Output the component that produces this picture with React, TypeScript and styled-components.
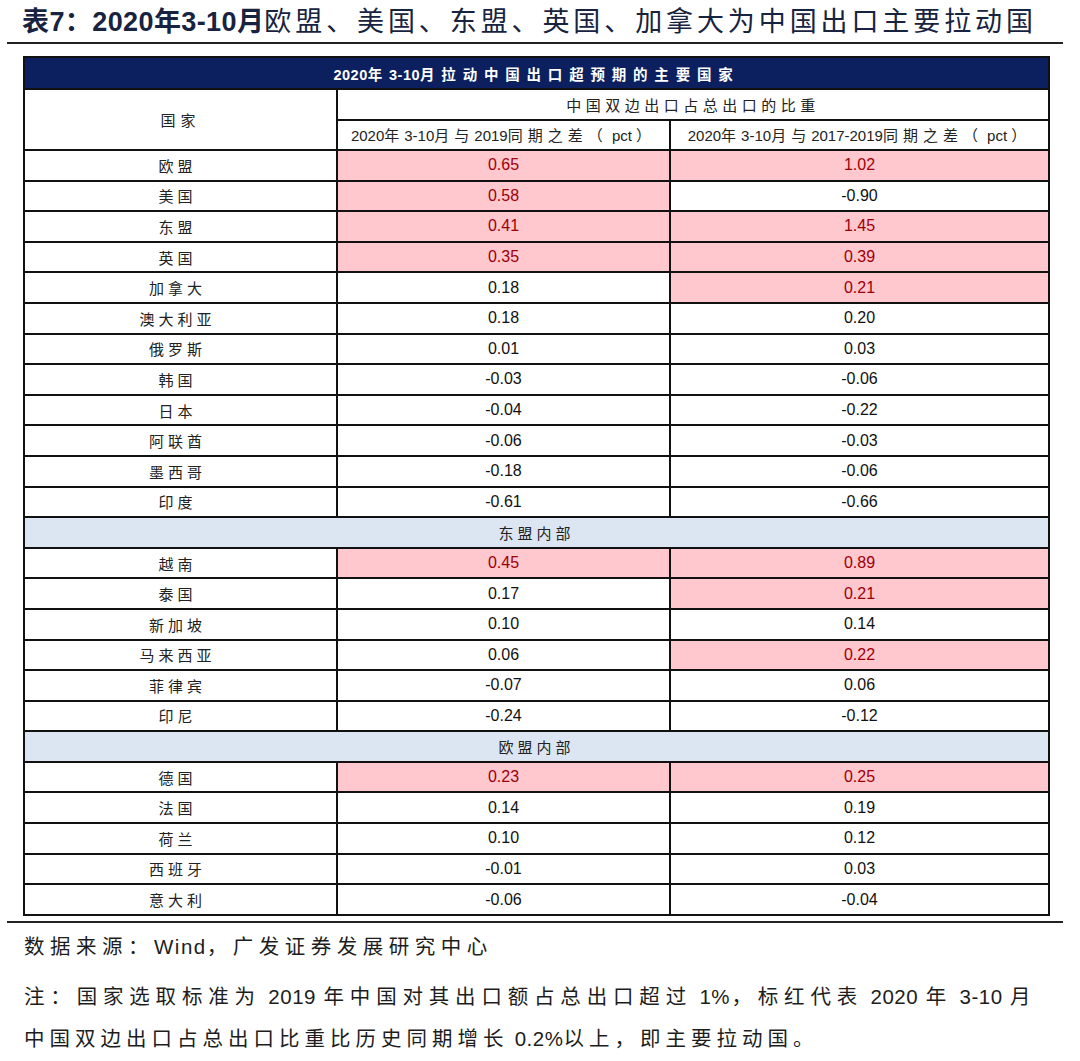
import React from "react";
import styled, { createGlobalStyle } from "styled-components";

const Global = createGlobalStyle`
  html, body { margin: 0; padding: 0; background: #fff; }
  body { font-family: "Liberation Sans", "Noto Sans CJK SC", sans-serif; }
`;

const Page = styled.div`
  width: 1080px;
  height: 1061px;
  overflow: hidden;
  display: flex;
  flex-direction: column;
`;

const Han = styled.span<{ $gap: number }>`
  letter-spacing: ${(p) => p.$gap}px;
`;

const Latin = styled.span<{ $gap: number }>`
  letter-spacing: ${(p) => p.$gap}px;
`;

const CJK = /([\u3000-\u303f\u4e00-\u9fff\uff00-\uffef]+)/;

function Mixed({ text, han, latin = 0 }: { text: string; han: number; latin?: number }) {
  const parts = text.split(CJK).filter((s) => s.length > 0);
  return (
    <>
      {parts.map((s, i) =>
        CJK.test(s) ? (
          <Han key={i} $gap={han}>
            {s}
          </Han>
        ) : (
          <Latin key={i} $gap={latin}>
            {s}
          </Latin>
        )
      )}
    </>
  );
}

const TitleBar = styled.div`
  margin-left: 7px;
  width: 1056px;
  height: 44px;
  border-bottom: 2px solid #222;
  box-sizing: border-box;
  display: flex;
  align-items: center;
  padding-left: 15px;
  padding-bottom: 3px;
`;

const Title = styled.h1`
  margin: 0;
  font-size: 27px;
  font-weight: 400;
  color: #17233f;
  letter-spacing: 3.9px;
  white-space: nowrap;
  font-family: "Liberation Sans", "Noto Sans CJK SC", sans-serif;
`;

const TitleStrong = styled.span`
  font-weight: 700;
  letter-spacing: 0.4px;
`;

const Table = styled.table`
  margin-left: 23px;
  margin-top: 12px;
  width: 1025px;
  border-collapse: collapse;
  table-layout: fixed;
  font-size: 16px;
  color: #111;
`;

const Cell = styled.td<{ $tone?: "hot" | "plain" }>`
  border: 2px solid #111;
  padding: 0;
  text-align: center;
  vertical-align: middle;
  height: 28.6px;
  background: ${(p) => (p.$tone === "hot" ? "#ffc7ce" : "#fff")};
  color: ${(p) => (p.$tone === "hot" ? "#9c0006" : "#111")};
  font-family: "Liberation Sans", "Noto Sans CJK SC", sans-serif;
  white-space: nowrap;
`;

const NameCell = styled(Cell)`
  font-family: "Noto Sans CJK SC", sans-serif;
  letter-spacing: 4px;
  font-size: 15px;
  color: #222;
  padding-right: 6px;
`;

const BannerCell = styled.th`
  border: 2px solid #111;
  background: #0c1f5e;
  color: #fff;
  font-size: 14.5px;
  font-weight: 700;
  height: 30px;
  text-align: center;
  padding: 0;
  white-space: nowrap;
  font-family: "Liberation Sans", "Noto Sans CJK SC", sans-serif;
`;

const HeadCell = styled.th`
  border: 2px solid #111;
  background: #fff;
  color: #222;
  font-weight: 400;
  font-size: 15px;
  height: 28.5px;
  padding: 0;
  text-align: center;
  white-space: nowrap;
  font-family: "Liberation Sans", "Noto Sans CJK SC", sans-serif;
`;

const SectionCell = styled.td`
  border: 2px solid #111;
  background: #dce6f2;
  color: #222;
  height: 28.6px;
  padding: 0;
  text-align: center;
  letter-spacing: 4px;
  font-size: 15px;
  font-family: "Noto Sans CJK SC", sans-serif;
`;

const FootRule = styled.div`
  margin-left: 7px;
  margin-top: 5px;
  width: 1056px;
  border-top: 2px solid #222;
`;

const Notes = styled.div`
  padding-left: 24px;
  padding-top: 3px;
  width: 1011px;
  color: #1d1d1d;
  font-size: 20.5px;
  line-height: 42px;
  font-family: "Liberation Sans", "Noto Sans CJK SC", sans-serif;
  white-space: nowrap;
`;

const NoteLine = styled.div<{ $after?: number; $justify?: boolean }>`
  margin-bottom: ${(p) => p.$after ?? 0}px;
  text-align: ${(p) => (p.$justify ? "justify" : "left")};
  text-align-last: ${(p) => (p.$justify ? "justify" : "auto")};
  white-space: ${(p) => (p.$justify ? "normal" : "nowrap")};
`;

type Row = [string, string, string, boolean, boolean];

const main: Row[] = [
  ["欧盟", "0.65", "1.02", true, true],
  ["美国", "0.58", "-0.90", true, false],
  ["东盟", "0.41", "1.45", true, true],
  ["英国", "0.35", "0.39", true, true],
  ["加拿大", "0.18", "0.21", false, true],
  ["澳大利亚", "0.18", "0.20", false, false],
  ["俄罗斯", "0.01", "0.03", false, false],
  ["韩国", "-0.03", "-0.06", false, false],
  ["日本", "-0.04", "-0.22", false, false],
  ["阿联酋", "-0.06", "-0.03", false, false],
  ["墨西哥", "-0.18", "-0.06", false, false],
  ["印度", "-0.61", "-0.66", false, false],
];

const asean: Row[] = [
  ["越南", "0.45", "0.89", true, true],
  ["泰国", "0.17", "0.21", false, true],
  ["新加坡", "0.10", "0.14", false, false],
  ["马来西亚", "0.06", "0.22", false, true],
  ["菲律宾", "-0.07", "0.06", false, false],
  ["印尼", "-0.24", "-0.12", false, false],
];

const eu: Row[] = [
  ["德国", "0.23", "0.25", true, true],
  ["法国", "0.14", "0.19", false, false],
  ["荷兰", "0.10", "0.12", false, false],
  ["西班牙", "-0.01", "0.03", false, false],
  ["意大利", "-0.06", "-0.04", false, false],
];

const DataRow = ({ row }: { row: Row }) => (
  <tr>
    <NameCell>{row[0]}</NameCell>
    <Cell $tone={row[3] ? "hot" : "plain"}>{row[1]}</Cell>
    <Cell $tone={row[4] ? "hot" : "plain"}>{row[2]}</Cell>
  </tr>
);

export default function App() {
  return (
    <Page>
      <Global />
      <TitleBar>
        <Title>
          <TitleStrong>表7：2020年3-10月</TitleStrong>欧盟、美国、东盟、英国、加拿大为中国出口主要拉动国
        </Title>
      </TitleBar>
      <Table>
        <colgroup>
          <col style={{ width: 313 }} />
          <col style={{ width: 333 }} />
          <col style={{ width: 379 }} />
        </colgroup>
        <thead>
          <tr>
            <BannerCell colSpan={3}>
              <Mixed text="2020年3-10月拉动中国出口超预期的主要国家" han={6.8} latin={0.5} />
            </BannerCell>
          </tr>
          <tr>
            <HeadCell rowSpan={2}>
              <Mixed text="国家" han={5} />
            </HeadCell>
            <HeadCell colSpan={2}>
              <Mixed text="中国双边出口占总出口的比重" han={4.5} />
            </HeadCell>
          </tr>
          <tr>
            <HeadCell>
              <Mixed text="2020年3-10月与2019同期之差（ pct ）" han={5} />
            </HeadCell>
            <HeadCell>
              <Mixed text="2020年3-10月与2017-2019同期之差（ pct ）" han={5} />
            </HeadCell>
          </tr>
        </thead>
        <tbody>
          {main.map((r) => (
            <DataRow key={r[0]} row={r} />
          ))}
          <tr>
            <SectionCell colSpan={3}>东盟内部</SectionCell>
          </tr>
          {asean.map((r) => (
            <DataRow key={r[0]} row={r} />
          ))}
          <tr>
            <SectionCell colSpan={3}>欧盟内部</SectionCell>
          </tr>
          {eu.map((r) => (
            <DataRow key={r[0]} row={r} />
          ))}
        </tbody>
      </Table>
      <FootRule />
      <Notes>
        <NoteLine $after={8}>
          <Mixed text="数据来源：Wind，广发证券发展研究中心" han={5.5} latin={1.5} />
        </NoteLine>
        <NoteLine $justify>
          <Mixed text="注：国家选取标准为 2019 年中国对其出口额占总出口超过 1%，标红代表 2020 年 3-10 月" han={4.5} latin={0.5} />
        </NoteLine>
        <NoteLine>
          <Mixed text="中国双边出口占总出口比重比历史同期增长 0.2%以上，即主要拉动国。" han={5} latin={0.5} />
        </NoteLine>
      </Notes>
    </Page>
  );
}
